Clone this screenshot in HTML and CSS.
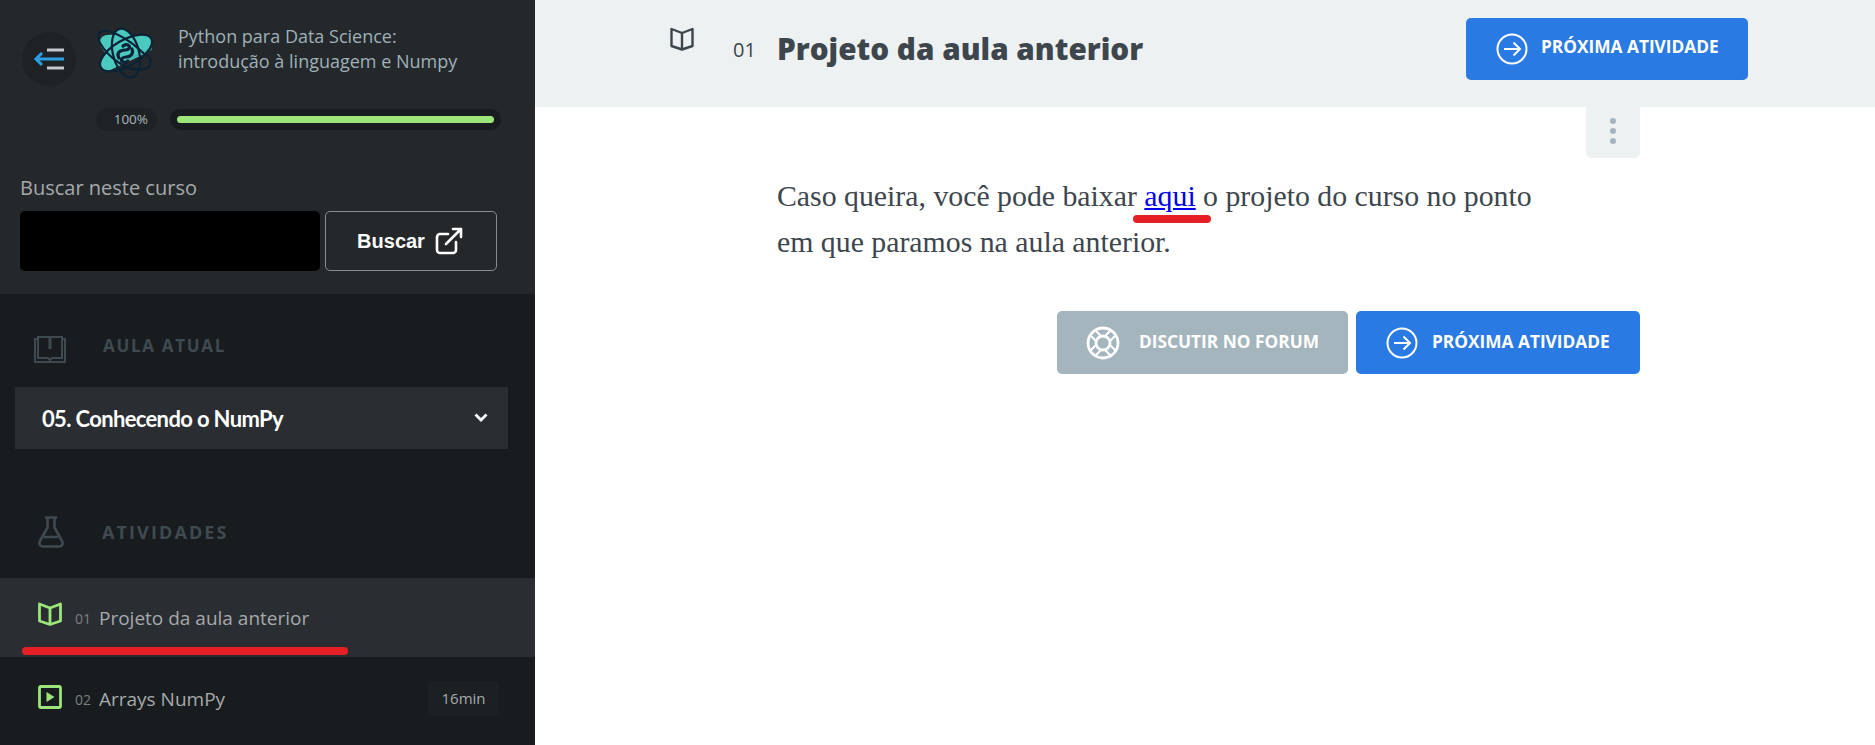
FILE: index.html
```html
<!DOCTYPE html>
<html lang="pt-BR">
<head>
<meta charset="utf-8">
<title>Projeto da aula anterior</title>
<link rel="stylesheet" href="styles.css">
</head>
<body>
<div class="page">
  <aside class="sidebar">
    <div class="side-top">
      <div class="course-head">
        <a class="back" href="#">
          <svg width="32" height="22" viewBox="0 0 32 22"><path d="M14 2h17M14 20h17" stroke="#c4c8ca" stroke-width="3" fill="none"/><path d="M31 11H3M9 5l-6 6 6 6" stroke="#2b9fe6" stroke-width="3" fill="none"/></svg>
        </a>
        <svg class="logo" width="58" height="58" viewBox="0 0 58 58">
          <defs><clipPath id="cut"><path d="M0 0H58V24L6 49 0 49z"/></clipPath></defs>
          <g clip-path="url(#cut)" fill="#4ac9bf">
            <ellipse cx="30" cy="28" rx="13" ry="25" transform="rotate(-15 30 28)"/>
            <ellipse cx="30" cy="28" rx="13" ry="29" transform="rotate(60 30 28)"/>
            <ellipse cx="30" cy="28" rx="13" ry="29" transform="rotate(-60 30 28)"/>
            <path d="M14 14H46V30L14 42z"/>
          </g>
          <path d="M20 41L56 25V22L20 38z" fill="#3db3ac" opacity=".6"/>
          <g fill="none" stroke="#0c2236" stroke-width="2.200">
            <ellipse cx="30" cy="28" rx="13" ry="25" transform="rotate(-15 30 28)"/>
            <ellipse cx="30" cy="28" rx="13" ry="29" transform="rotate(60 30 28)"/>
            <path d="M48 44C32 48 12 32 4 18 0 10 3 5 11 6c8 1 24 10 34 20 3 3 6 5 8 5M53 31c3 6 2 12-5 13"/>
          </g>
          <path d="M23 33c-3-5 1-8 6-8 4 0 6-3 3-5-2-1-4 0-5 1M36 24c2 5-2 8-6 8s-6 3-3 5c2 1 4 0 5-1" fill="none" stroke="#0c2236" stroke-width="3.200" stroke-linecap="round"/>
        </svg>
        <p class="course-title">Python para Data Science:<br>introdução à linguagem e Numpy</p>
      </div>
      <div class="progress-row">
        <span class="pill">100%</span>
        <div class="track"><div class="fill"></div></div>
      </div>
      <label class="search-label">Buscar neste curso</label>
      <div class="search-row">
        <div class="search-input"></div>
        <button class="search-btn">Buscar
          <svg width="28" height="28" viewBox="0 0 28 28" fill="none" stroke="#fff" stroke-width="2.600" stroke-linecap="round" stroke-linejoin="round"><path d="M21 15v8a3 3 0 0 1-3 3H5a3 3 0 0 1-3-3V10a3 3 0 0 1 3-3h8"/><path d="M18 2h8v8M26 2L11 17"/></svg>
        </button>
      </div>
    </div>
    <div class="side-body">
      <div class="section-head lesson-head">
        <svg class="sec-icon" width="32" height="28" viewBox="0 0 32 28" fill="none" stroke="#3f4a50" stroke-width="2"><path d="M4 4H1v23h30V4h-3"/><path d="M4 23V2h11l1 2 1-2h11v21H18l-2 2-2-2z"/><path d="M16 4v10" stroke-width="3"/></svg>
        <span class="sec-title">AULA ATUAL</span>
      </div>
      <div class="lesson-select">
        <span>05. Conhecendo o NumPy</span>
        <svg width="14" height="10" viewBox="0 0 14 10" fill="none" stroke="#fff" stroke-width="2.800"><path d="M1.500 1.500L7 7l5.500-5.500"/></svg>
      </div>
      <div class="section-head act-head">
        <svg class="sec-icon-flask" width="26" height="32" viewBox="0 0 26 32" fill="none" stroke="#3f4a50" stroke-width="2.600" stroke-linejoin="round"><path d="M7 1.500h12M9.500 1.500v10L2 25c-1.500 3 0 5.500 3 5.500h16c3 0 4.500-2.500 3-5.500L16.500 11.500v-10"/><path d="M6 21h14"/></svg>
        <span class="sec-title">ATIVIDADES</span>
      </div>
      <ul class="activities">
        <li class="activity active">
          <svg class="act-icon" width="24" height="24" viewBox="0 0 24 24" fill="none" stroke="#9be57b" stroke-width="2.800" stroke-linejoin="round"><path d="M1.500 2L12 6l10.500-4v17L12 22.500 1.500 19z"/><path d="M12 6v16"/></svg>
          <span class="act-num">01</span>
          <span class="act-name">Projeto da aula anterior</span>
          <span class="mark mark-side"></span>
        </li>
        <li class="activity">
          <svg class="act-icon" width="24" height="24" viewBox="0 0 24 24"><rect x="1.500" y="1.500" width="21" height="21" rx="1.500" fill="none" stroke="#9be57b" stroke-width="2.800"/><path d="M8.500 7l8 5-8 5z" fill="#9be57b"/></svg>
          <span class="act-num">02</span>
          <span class="act-name">Arrays NumPy</span>
          <span class="badge">16min</span>
        </li>
      </ul>
    </div>
  </aside>
  <main class="main">
    <header class="top">
      <svg class="top-icon" width="24" height="24" viewBox="0 0 24 24" fill="none" stroke="#3d464d" stroke-width="2.400" stroke-linejoin="round"><path d="M1.500 2L12 6l10.500-4v17L12 22.500 1.500 19z"/><path d="M12 6v16"/></svg>
      <span class="top-num">01</span>
      <h1 class="top-title">Projeto da aula anterior</h1>
      <a class="btn btn-blue btn-top" href="#">
        <svg width="32" height="32" viewBox="0 0 32 32" fill="none" stroke="#fff" stroke-width="2"><circle cx="16" cy="16" r="14.500"/><path d="M8 16h16M17.500 9.500L24 16l-6.500 6.500"/></svg>
        <span class="btn-label">PRÓXIMA ATIVIDADE</span>
      </a>
    </header>
    <div class="kebab"><i></i><i></i><i></i></div>
    <section class="content">
      <p class="text">Caso queira, você pode baixar <span class="link-wrap"><a href="#">aqui</a><span class="mark mark-link"></span></span> o projeto do curso no ponto<br>em que paramos na aula anterior.</p>
      <div class="actions">
        <a class="btn btn-grey" href="#">
          <svg width="34" height="34" viewBox="0 0 34 34" fill="none" stroke="#fff" stroke-width="2.800"><circle cx="17" cy="17" r="15"/><circle cx="17" cy="17" r="7"/><path stroke-width="2.200" d="M24.500 14.500L30 9M19.500 9.500L25 4M9.500 14.500L4 9M14.500 9.500L9 4M24.500 19.500L30 25M19.500 24.500L25 30M9.500 19.500L4 25M14.500 24.500L9 30"/></svg>
          <span class="btn-label">DISCUTIR NO FORUM</span>
        </a>
        <a class="btn btn-blue btn-next" href="#">
          <svg width="32" height="32" viewBox="0 0 32 32" fill="none" stroke="#fff" stroke-width="2"><circle cx="16" cy="16" r="14.500"/><path d="M8 16h16M17.500 9.500L24 16l-6.500 6.500"/></svg>
          <span class="btn-label">PRÓXIMA ATIVIDADE</span>
        </a>
      </div>
    </section>
  </main>
</div>
</body>
</html>
```
FILE: styles.css
```css
* { box-sizing: border-box; }
html, body { margin: 0; height: 100%; overflow: hidden; background: #fff; }
body { font-family: "Open Sans", sans-serif; }
.page { display: flex; height: 745px; }

.sidebar { width: 535px; flex: none; background: #181c1f; display: flex; flex-direction: column; }
.side-top { height: 294px; background: #24282b; padding: 25px 0 0; }
.course-head { display: flex; align-items: flex-start; padding-left: 22px; }
.back { width: 54px; height: 54px; margin-top: 7px; border-radius: 50%; background: #1e2225; display: flex; align-items: center; justify-content: center; flex: none; }
.logo { margin-left: 20px; flex: none; }
.course-title { margin: -1px 0 0 24px; color: #9fb0b8; font-size: 18px; line-height: 25px; }
.progress-row { display: flex; align-items: center; gap: 13px; margin: 22px 0 0 96px; }
.pill { width: 61px; height: 23px; border-radius: 12px; background: #1e2225; color: #a9b6bc; font-size: 13.500px; line-height: 23px; text-align: right; padding-right: 9px; }
.track { width: 331px; height: 21px; border-radius: 11px; background: #181c1f; padding: 7px; }
.fill { height: 7px; border-radius: 4px; background: #9be57b; }
.search-label { display: block; margin: 45px 0 0 20px; color: #a6a9ab; font-size: 20px; line-height: 24px; height: 34px; }
.search-row { display: flex; gap: 5px; padding: 1px 0 0 20px; }
.search-input { width: 300px; height: 60px; border-radius: 5px; background: #000; }
.search-btn { width: 172px; height: 60px; border: 1px solid #8a8d8f; border-radius: 5px; background: transparent; color: #fff; font-family: "Liberation Sans", Arial, sans-serif; font-weight: 700; font-size: 20px; display: flex; align-items: center; justify-content: center; gap: 10px; padding: 0 2px 0 0; }

.side-body { flex: 1; }
.section-head { display: flex; align-items: center; }
.lesson-head { padding: 41px 0 0 34px; height: 93px; align-items: flex-start; }
.sec-title { color: #3f4a50; font-size: 17px; font-weight: 700; letter-spacing: 1.700px; line-height: 21px; }
.lesson-head .sec-title { margin-left: 37px; }
.lesson-select { height: 62px; margin: 0 27px 0 15px; background: #2a2e32; display: flex; align-items: center; justify-content: space-between; padding: 0 20px 0 27px; color: #fff; font-family: Lato, sans-serif; font-weight: 700; font-size: 22px; letter-spacing: -0.650px; }
.act-head { padding: 67px 0 0 38px; height: 129px; align-items: flex-start; }
.act-head .sec-title { margin-left: 38px; line-height: 32px; font-size: 18px; letter-spacing: 2.100px; }
.activities { list-style: none; margin: 0; padding: 0; }
.activity { position: relative; height: 79px; display: flex; align-items: center; padding-left: 38px; color: #a6a9ab; }
.activity.active { background: #2a2e32; }
.activity + .activity { height: 88px; }
.act-icon { flex: none; margin-top: -8px; }
.act-num { font-size: 14px; margin-left: 13px; width: 24px; color: #7a7f82; }
.act-name { font-size: 19px; }
.activity .act-num, .activity .act-name { margin-top: -4px; }
.activity.active .act-num, .activity.active .act-name { margin-top: 1px; }
.badge { position: absolute; left: 428px; top: 24px; width: 71px; height: 35px; border-radius: 4px; background: #1c2023; text-align: center; font-size: 15px; line-height: 35px; }
.mark { position: absolute; background: #e61e25; border-radius: 4px; }
.mark-side { left: 22px; top: 69px; width: 326px; height: 8px; }
.mark-link { left: -11px; top: 42px; width: 78px; height: 8px; }

.main { flex: 1; min-width: 0; position: relative; }
.top { height: 107px; background: #edf1f2; display: flex; align-items: flex-start; position: relative; padding-left: 135px; }
.top-icon { margin-top: 27px; flex: none; }
.top-num { margin: 36px 0 0 39px; width: 44px; color: #3d464d; font-size: 20px; line-height: 27px; }
.top-title { margin: 28px 0 0; color: #3d464d; font-size: 29.700px; font-weight: 800; line-height: 41px; }
.btn { display: flex; align-items: center; text-decoration: none; color: #fff; font-weight: 700; font-size: 17.300px; border-radius: 5px; }
.btn-blue { background: #2a7ae4; }
.btn-label { margin-top: -3px; }
.btn-top { position: absolute; left: 931px; top: 18px; width: 282px; height: 62px; padding-left: 30px; gap: 13px; }
.btn-top .btn-label { margin-top: -5px; }
.kebab { position: absolute; left: 1051px; top: 107px; width: 54px; height: 51px; background: #edf1f2; border-radius: 0 0 5px 5px; display: flex; flex-direction: column; align-items: center; padding-top: 11px; gap: 4px; }
.kebab i { width: 6px; height: 6px; border-radius: 50%; background: #a4b5bd; }
.content { padding: 66px 235px 0 242px; }
.text { margin: 0; color: #3d464d; font-family: "Liberation Serif", serif; font-size: 29.800px; line-height: 46px; }
.link-wrap { position: relative; display: inline-block; }
.text a { color: #0000ee; text-decoration: underline; }
.actions { display: flex; justify-content: flex-end; gap: 8px; margin-top: 46px; margin-left: -8px; }
.actions .btn { height: 63px; }
.btn-grey { background: #a4b5bd; width: 291px; padding-left: 29px; gap: 19px; }
.btn-next { width: 284px; padding-left: 30px; gap: 14px; }
```
